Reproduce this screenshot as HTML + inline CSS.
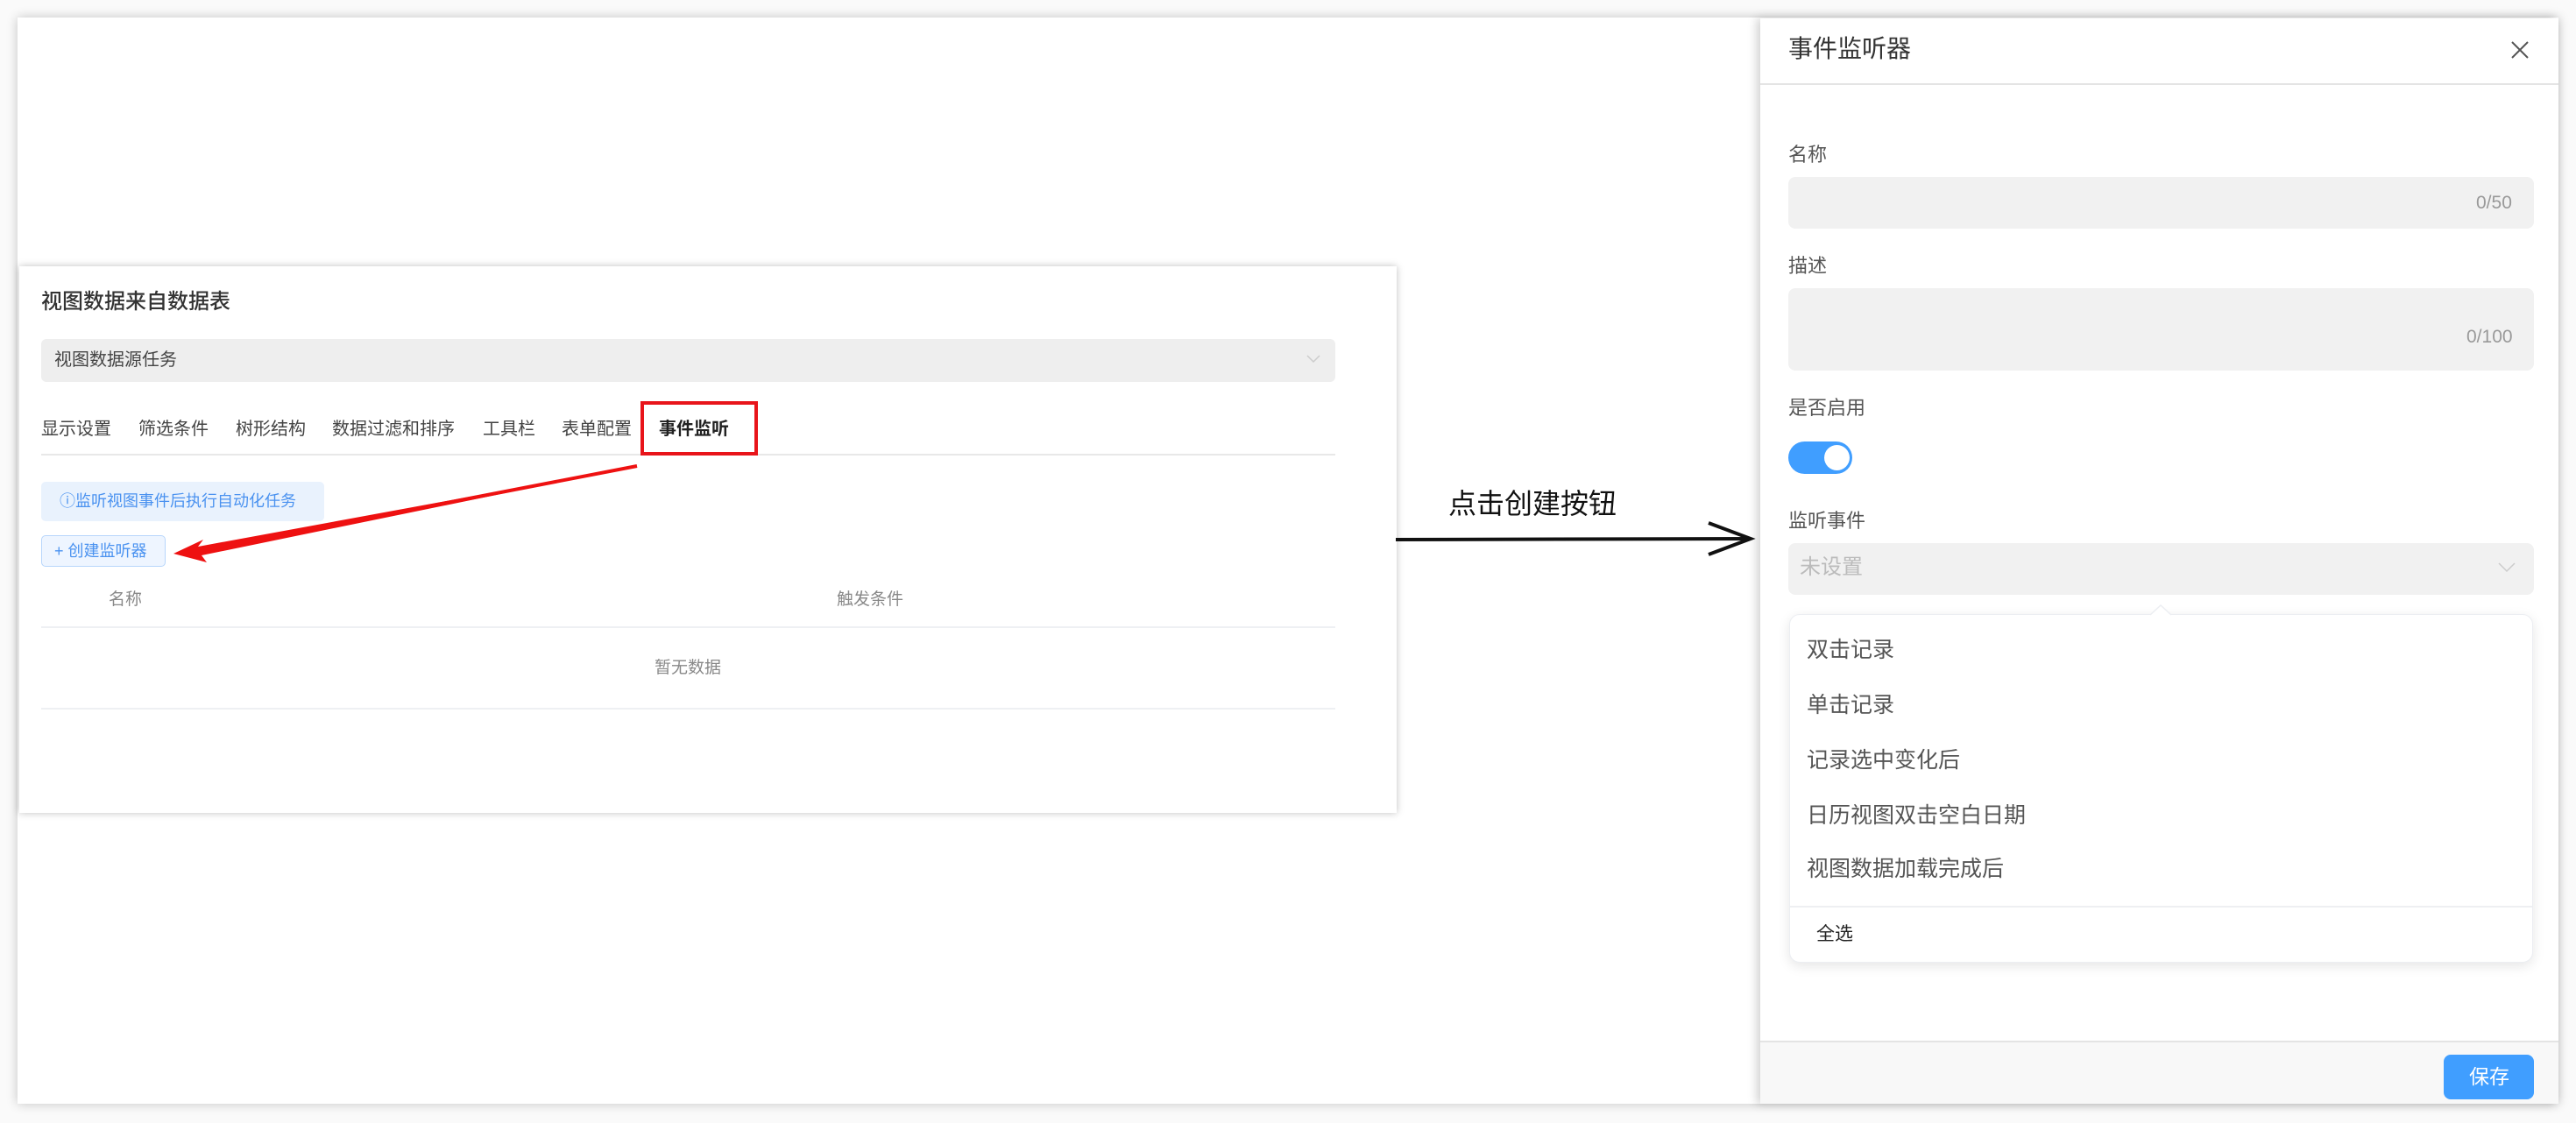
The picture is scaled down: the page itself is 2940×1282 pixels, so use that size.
<!DOCTYPE html>
<html><head><meta charset="utf-8">
<style>
*{margin:0;padding:0;box-sizing:border-box}
body{width:2940px;height:1282px;background:#fafafa;position:relative;overflow:hidden;font-family:"Liberation Sans","Noto Sans CJK SC",sans-serif}
.a{position:absolute}
.frame{left:20px;top:20px;width:2900px;height:1240px;background:#fff;box-shadow:0 0 12px rgba(0,0,0,.22)}
.lp{left:22px;top:304px;width:1572px;height:624px;background:#fff;box-shadow:0 0 8px rgba(0,0,0,.25)}
.t{white-space:nowrap;line-height:1}
.rp{left:2009px;top:21px;width:911px;height:1239px;background:#fff;box-shadow:-4px 0 10px rgba(0,0,0,.18)}
</style></head><body>
<div class="a frame"></div>
<div class="a lp"></div>
<div class="a t" style="left:47px;top:333px;font-size:24px;color:#333;font-weight:500">视图数据来自数据表</div>
<div class="a" style="left:47px;top:387px;width:1477px;height:49px;background:#eee;border-radius:6px"></div>
<div class="a t" style="left:62px;top:401px;font-size:20px;color:#444">视图数据源任务</div>
<svg class="a" style="left:1490px;top:404px" width="18" height="12"><path d="M2 2 L9 9 L16 2" stroke="#ccc" stroke-width="1.5" fill="none"/></svg>
<div class="a t" style="left:47px;top:480px;font-size:20px;color:#444">显示设置</div>
<div class="a t" style="left:158px;top:480px;font-size:20px;color:#444">筛选条件</div>
<div class="a t" style="left:269px;top:480px;font-size:20px;color:#444">树形结构</div>
<div class="a t" style="left:379px;top:480px;font-size:20px;color:#444">数据过滤和排序</div>
<div class="a t" style="left:551px;top:480px;font-size:20px;color:#444">工具栏</div>
<div class="a t" style="left:641px;top:480px;font-size:20px;color:#444">表单配置</div>
<div class="a t" style="left:752px;top:480px;font-size:20px;color:#222;font-weight:bold">事件监听</div>
<div class="a" style="left:47px;top:518px;width:1477px;height:2px;background:#e8e8e8"></div>
<div class="a" style="left:731px;top:458px;width:134px;height:62px;border:4px solid #e8141a"></div>
<div class="a" style="left:47px;top:550px;width:323px;height:45px;background:#e9f2fd;border-radius:5px"></div>
<div class="a t" style="left:68px;top:563px;font-size:18px;color:#4a92f0">ⓘ监听视图事件后执行自动化任务</div>
<div class="a" style="left:47px;top:611px;width:142px;height:36px;background:#eef5ff;border:1.5px solid #b8d6fb;border-radius:5px"></div>
<div class="a t" style="left:62px;top:620px;font-size:18px;color:#4a92f0">+ 创建监听器</div>
<div class="a t" style="left:124px;top:675px;font-size:19px;color:#888">名称</div>
<div class="a t" style="left:955px;top:675px;font-size:19px;color:#888">触发条件</div>
<div class="a" style="left:47px;top:715px;width:1477px;height:2px;background:#eef0f3"></div>
<div class="a t" style="left:747px;top:753px;font-size:19px;color:#888">暂无数据</div>
<div class="a" style="left:47px;top:808px;width:1477px;height:2px;background:#eef0f3"></div>
<svg class="a" style="left:0;top:0" width="1600" height="700"><path d="M727 532 L226 624 L232 616 L198 632 L236 642 L230 634 Z" fill="#ee1111"/><path d="M727 532 L230 628" stroke="#ee1111" stroke-width="4"/></svg>
<div class="a t" style="left:1653px;top:559px;font-size:32px;color:#111">点击创建按钮</div>
<svg class="a" style="left:1590px;top:590px" width="420" height="50"><path d="M3 26 L408 25" stroke="#111" stroke-width="4" fill="none"/><path d="M360 7 L408 25 L360 43" stroke="#111" stroke-width="4" fill="none"/></svg>
<div class="a rp"></div>
<div class="a t" style="left:2041px;top:42px;font-size:28px;color:#333">事件监听器</div>
<svg class="a" style="left:2865px;top:46px" width="22" height="22"><path d="M2 2L20 20M20 2L2 20" stroke="#555" stroke-width="2"/></svg>
<div class="a" style="left:2009px;top:95px;width:911px;height:2px;background:#e4e4e4"></div>
<div class="a t" style="left:2041px;top:166px;font-size:22px;color:#555">名称</div>
<div class="a" style="left:2041px;top:202px;width:851px;height:59px;background:#f1f1f1;border-radius:8px"></div>
<div class="a t" style="left:2826px;top:221px;font-size:21px;color:#999">0/50</div>
<div class="a t" style="left:2041px;top:293px;font-size:22px;color:#555">描述</div>
<div class="a" style="left:2041px;top:329px;width:851px;height:94px;background:#f1f1f1;border-radius:8px"></div>
<div class="a t" style="left:2815px;top:374px;font-size:21px;color:#999">0/100</div>
<div class="a t" style="left:2041px;top:455px;font-size:22px;color:#555">是否启用</div>
<div class="a" style="left:2041px;top:504px;width:73px;height:37px;background:#409eff;border-radius:19px"></div>
<div class="a" style="left:2082px;top:508px;width:29px;height:29px;background:#fff;border-radius:50%"></div>
<div class="a t" style="left:2041px;top:584px;font-size:22px;color:#555">监听事件</div>
<div class="a" style="left:2041px;top:620px;width:851px;height:59px;background:#f1f1f1;border-radius:8px"></div>
<div class="a t" style="left:2054px;top:636px;font-size:24px;color:#bbb">未设置</div>
<svg class="a" style="left:2850px;top:641px" width="22" height="14"><path d="M2 2L11 11L20 2" stroke="#ccc" stroke-width="1.5" fill="none"/></svg>
<div class="a" style="left:2042px;top:701px;width:849px;height:398px;background:#fff;border:1.5px solid #eceef2;border-radius:12px;box-shadow:0 4px 14px rgba(0,0,0,.10)"></div>
<svg class="a" style="left:2454px;top:690px" width="24" height="13"><path d="M0 12L12 1L24 12" fill="#fff" stroke="#eceef2" stroke-width="1.5"/></svg>
<div class="a t" style="left:2062px;top:730px;font-size:25px;color:#555">双击记录</div>
<div class="a t" style="left:2062px;top:793px;font-size:25px;color:#555">单击记录</div>
<div class="a t" style="left:2062px;top:856px;font-size:25px;color:#555">记录选中变化后</div>
<div class="a t" style="left:2062px;top:919px;font-size:25px;color:#555">日历视图双击空白日期</div>
<div class="a t" style="left:2062px;top:980px;font-size:25px;color:#555">视图数据加载完成后</div>
<div class="a" style="left:2043px;top:1034px;width:847px;height:2px;background:#eeeff2"></div>
<div class="a t" style="left:2073px;top:1056px;font-size:21px;color:#222">全选</div>
<div class="a" style="left:2009px;top:1188px;width:911px;height:72px;background:#f8f8f8;border-top:2px solid #e4e4e4"></div>
<div class="a" style="left:2789px;top:1204px;width:103px;height:51px;background:#409eff;border-radius:8px"></div>
<div class="a t" style="left:2818px;top:1218px;font-size:23px;color:#fff">保存</div>
</body></html>
